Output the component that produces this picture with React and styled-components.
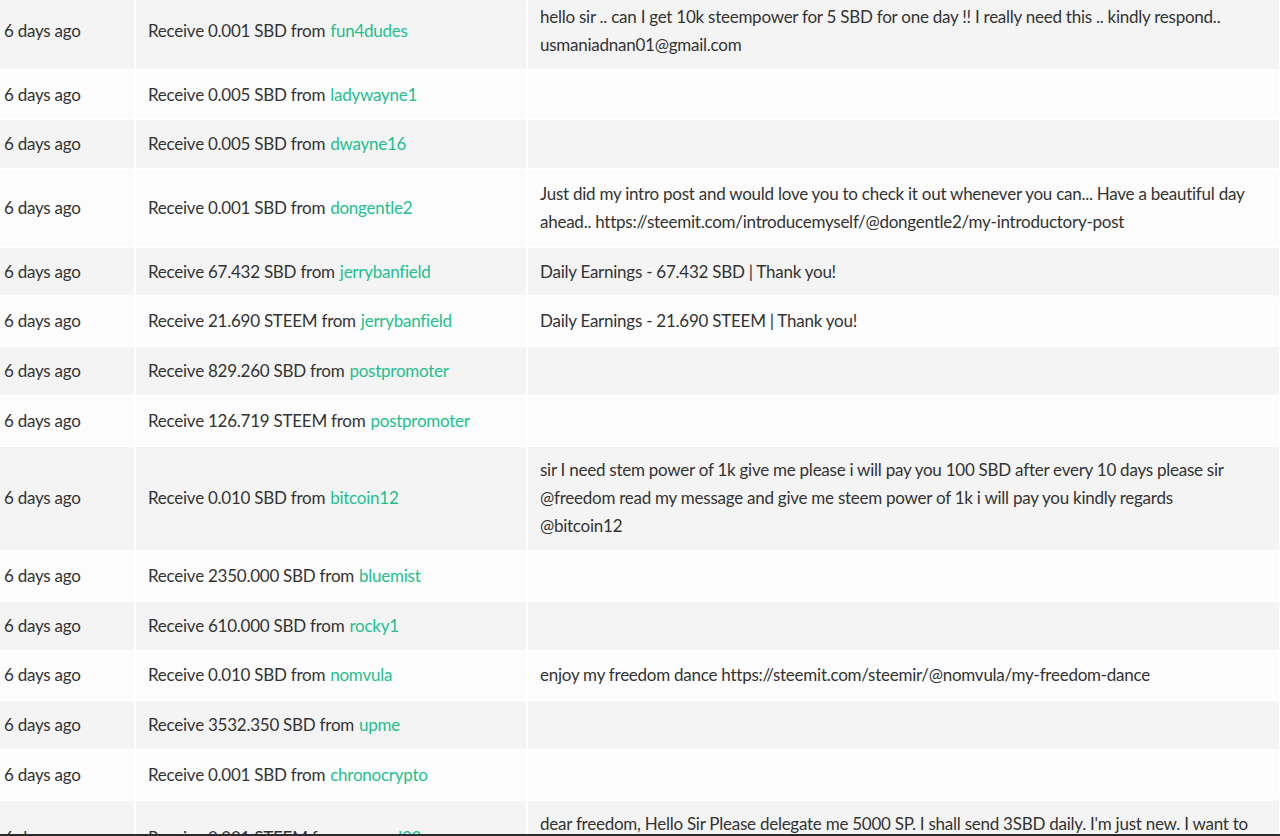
import React from "react";
import styled, { createGlobalStyle } from "styled-components";

const GlobalStyle = createGlobalStyle`
  html, body { margin: 0; padding: 0; background: #ffffff; overflow: hidden; }
  body { font-family: "Source Sans Pro", Lato, "Noto Sans", sans-serif; }
`;

const List = styled.div`
  display: flex;
  flex-direction: column;
  gap: 2px;
  margin-top: -7px;
  width: 1279px;
`;

const Row = styled.div`
  display: grid;
  grid-template-columns: 134px 390px 751px;
  column-gap: 2px;
`;

const Cell = styled.div`
  background: ${(p) => (p.$odd ? "#f4f4f4" : "#fcfcfc")};
  color: #333333;
  font-size: 17px;
  line-height: 28px;
  padding: 9.85px 12px;
  display: flex;
  align-items: center;
  letter-spacing: -0.25px;
  white-space: nowrap;
`;

const DateCell = styled(Cell)`
  padding-left: 4px;
`;

const MemoCell = styled(Cell)`
  flex-direction: column;
  align-items: flex-start;
  justify-content: center;
`;

const UserLink = styled.a`
  color: #1fbf8f;
  text-decoration: none;
  margin-left: 5px;
`;

const Line = styled.span`
  display: block;
`;

const BottomEdge = styled.div`
  position: fixed;
  left: 0;
  right: 0;
  bottom: 0;
  height: 2px;
  background: #2a2a2a;
`;

const rows = [
  { amt: "0.001 SBD", from: "fun4dudes", memo: ["hello sir .. can I get 10k steempower for 5 SBD for one day !! I really need this .. kindly respond..", "usmaniadnan01@gmail.com"] },
  { amt: "0.005 SBD", from: "ladywayne1" },
  { amt: "0.005 SBD", from: "dwayne16" },
  { amt: "0.001 SBD", from: "dongentle2", memo: ["Just did my intro post and would love you to check it out whenever you can... Have a beautiful day", "ahead.. https://steemit.com/introducemyself/@dongentle2/my-introductory-post"] },
  { amt: "67.432 SBD", from: "jerrybanfield", memo: ["Daily Earnings - 67.432 SBD | Thank you!"] },
  { amt: "21.690 STEEM", from: "jerrybanfield", memo: ["Daily Earnings - 21.690 STEEM | Thank you!"] },
  { amt: "829.260 SBD", from: "postpromoter" },
  { amt: "126.719 STEEM", from: "postpromoter" },
  { amt: "0.010 SBD", from: "bitcoin12", memo: ["sir I need stem power of 1k give me please i will pay you 100 SBD after every 10 days please sir", "@freedom read my message and give me steem power of 1k i will pay you kindly regards", "@bitcoin12"] },
  { amt: "2350.000 SBD", from: "bluemist" },
  { amt: "610.000 SBD", from: "rocky1" },
  { amt: "0.010 SBD", from: "nomvula", memo: ["enjoy my freedom dance https://steemit.com/steemir/@nomvula/my-freedom-dance"] },
  { amt: "3532.350 SBD", from: "upme" },
  { amt: "0.001 SBD", from: "chronocrypto" },
  { amt: "0.001 STEEM", from: "samuel22", memo: ["dear freedom, Hello Sir Please delegate me 5000 SP. I shall send 3SBD daily. I'm just new. I want to", "grow on steemit. Thank you sir"] },
];

export default function App() {
  return (
    <>
      <GlobalStyle />
      <List>
        {rows.map((r, i) => {
          const odd = i % 2 === 0;
          return (
            <Row key={i}>
              <DateCell $odd={odd}>6 days ago</DateCell>
              <Cell $odd={odd}>
                Receive {r.amt} from
                <UserLink href="#">{r.from}</UserLink>
              </Cell>
              <MemoCell $odd={odd}>
                {(r.memo || []).map((l, j) => (
                  <Line key={j}>{l}</Line>
                ))}
              </MemoCell>
            </Row>
          );
        })}
      </List>
      <BottomEdge />
    </>
  );
}
